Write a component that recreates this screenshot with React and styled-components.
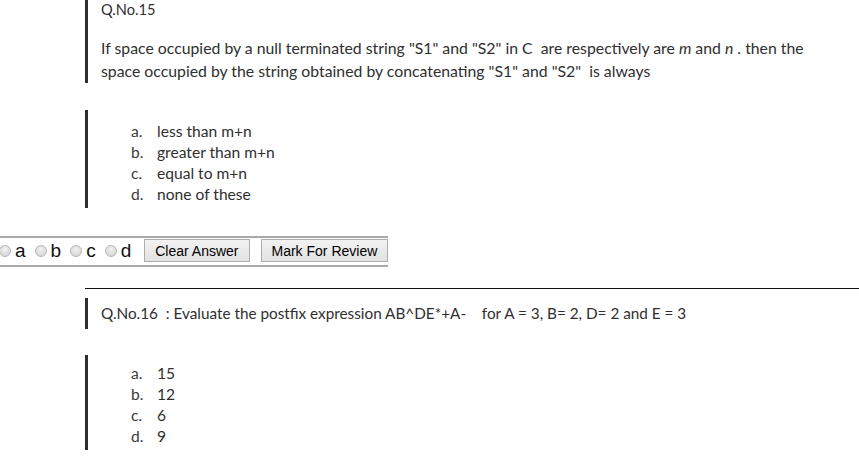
import React from 'react';
import styled, { createGlobalStyle } from 'styled-components';

const GlobalStyle = createGlobalStyle`
  html, body {
    margin: 0;
    padding: 0;
    background: #ffffff;
  }
  body {
    overflow: hidden;
  }
`;

const Page = styled.div`
  width: 859px;
  height: 466px;
  overflow: hidden;
`;

const QuestionSection = styled.section`
  border-top: ${props => (props.$ruled ? '1px solid #111' : 'none')};
  padding-top: ${props => props.$top || 0}px;
  margin-top: ${props => props.$offset || 0}px;
  margin-left: ${props => props.$left || 0}px;
`;

const BarBlock = styled.div`
  border-left: 3px solid #2e2e2e;
  margin-left: ${props => (props.$flush ? 0 : 85)}px;
  height: ${props => props.$height}px;
  margin-top: ${props => props.$gap || 0}px;
  padding-left: 13px;
  padding-top: ${props => props.$pad || 0}px;
  box-sizing: border-box;
  font-family: Lato, 'Open Sans', sans-serif;
  color: #2f2f2f;
  font-size: ${props => props.$size || 14.6}px;
`;

const Title = styled.div`
  line-height: 20px;
`;

const Body = styled.p`
  margin: 16px 0 0;
  line-height: 23px;
  font-size: 15.8px;
  width: 720px;
`;

const OptionList = styled.ol`
  list-style: none;
  margin: 0;
  padding: 0 0 0 30px;
  font-size: 15.6px;
`;

const OptionItem = styled.li`
  display: flex;
  line-height: 21px;
`;

const OptionKey = styled.span`
  width: 26px;
  color: #3a3a3a;
`;

const AnswerBar = styled.div`
  display: inline-flex;
  align-items: flex-start;
  box-sizing: border-box;
  margin-top: 28px;
  margin-left: -1px;
  padding-top: 1px;
  height: 31px;
  border-top: 2px solid #a9a9a9;
  border-bottom: 2px solid #a9a9a9;
  font-family: Arial, 'Liberation Sans', sans-serif;
`;

const RadioLabel = styled.label`
  display: inline-flex;
  align-items: center;
  height: 23px;
  font-size: 19px;
  font-weight: 400;
  color: #111;
  margin-right: 9px;
`;

const RadioDot = styled.span`
  display: inline-block;
  width: 10px;
  height: 10px;
  border-radius: 50%;
  border: 1px solid #b8b8b8;
  background: radial-gradient(circle at 50% 35%, #f2f2f2 0%, #d9d9d9 70%, #cfcfcf 100%);
  margin-right: 4px;
`;

const ActionButton = styled.button`
  font-family: Arial, 'Liberation Sans', sans-serif;
  font-size: 14px;
  color: #000;
  height: 23px;
  padding: 0 10px;
  margin-left: ${props => props.$gap}px;
  border: 1px solid #adadad;
  border-radius: 0;
  background: linear-gradient(#f2f2f2, #e2e2e2);
  cursor: pointer;
`;

const q15Options = ['less than m+n', 'greater than m+n', 'equal to m+n', 'none of these'];
const q16Options = ['15', '12', '6', '9'];
const keys = ['a.', 'b.', 'c.', 'd.'];

const Options = ({ items }) => (
  <OptionList>
    {items.map((text, i) => (
      <OptionItem key={text}>
        <OptionKey>{keys[i]}</OptionKey>
        <span>{text}</span>
      </OptionItem>
    ))}
  </OptionList>
);

export default function App() {
  return (
    <Page>
      <GlobalStyle />
      <QuestionSection>
        <BarBlock $height={83}>
          <Title>Q.No.15</Title>
          <Body>
            If space occupied by a null terminated string "S1" and "S2" in C&nbsp; are respectively are{' '}
            <i>m</i> and <i>n</i> . then the
            <br />
            space occupied by the string obtained by concatenating "S1" and "S2"&nbsp; is always
          </Body>
        </BarBlock>
        <BarBlock $height={98} $gap={27} $pad={11}>
          <Options items={q15Options} />
        </BarBlock>
        <AnswerBar>
          {['a', 'b', 'c', 'd'].map(k => (
            <RadioLabel key={k}>
              <RadioDot />
              {k}
            </RadioLabel>
          ))}
          <ActionButton $gap={4}>Clear Answer</ActionButton>
          <ActionButton $gap={11}>Mark For Review</ActionButton>
        </AnswerBar>
      </QuestionSection>
      <QuestionSection $ruled $top={9} $offset={21} $left={85}>
        <BarBlock $flush $height={31} $pad={5} $size={15.3}>
          <Title>Q.No.16&nbsp; : Evaluate the postfix expression AB^DE*+A-&nbsp;&nbsp;&nbsp; for A = 3, B= 2, D= 2 and E = 3</Title>
        </BarBlock>
        <BarBlock $flush $height={95} $gap={26} $pad={8}>
          <Options items={q16Options} />
        </BarBlock>
      </QuestionSection>
    </Page>
  );
}
